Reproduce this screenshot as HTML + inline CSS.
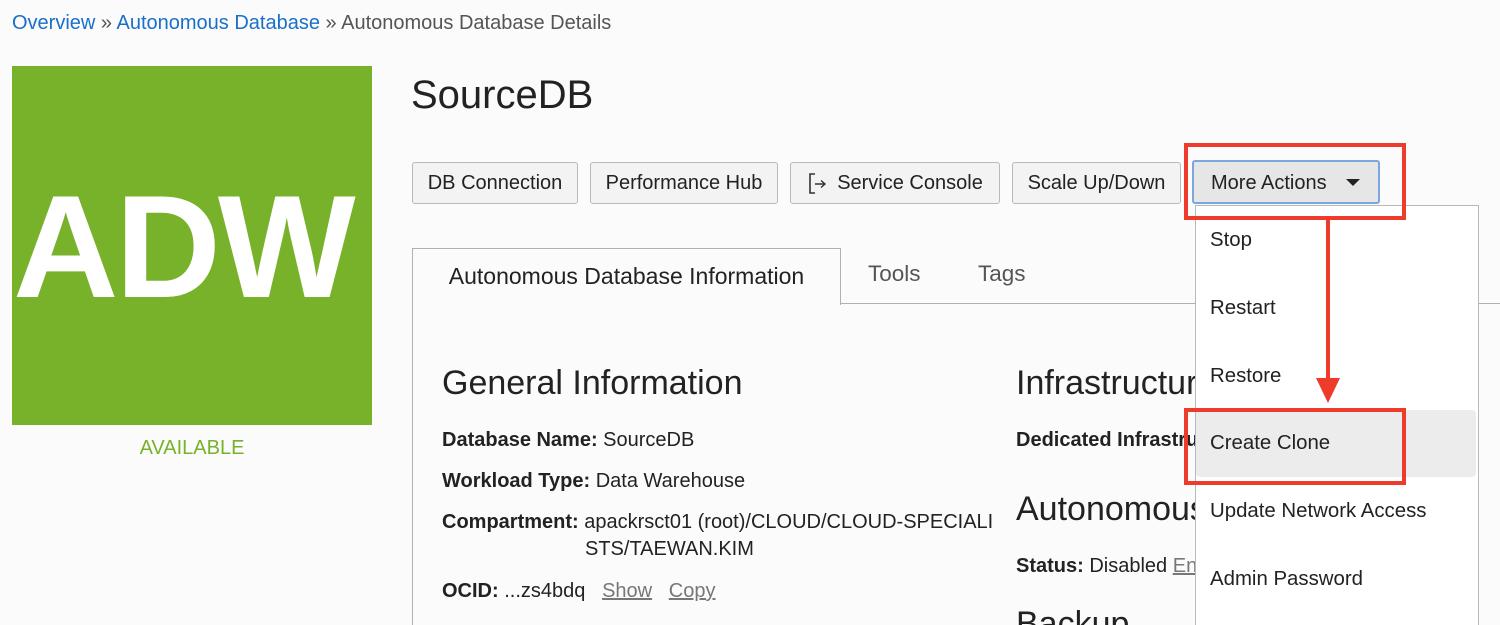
<!DOCTYPE html>
<html><head><style>
html,body{margin:0;width:1500px;height:625px;overflow:hidden}
body{background:#fbfbfb;font-family:"Liberation Sans",Arial,sans-serif;color:#222;position:relative}
.a{position:absolute;white-space:nowrap}
.bc{top:12px;left:12px;font-size:20px;color:#555}
.bc a{color:#1a6fc9;text-decoration:none}
.logo{left:12px;top:66px;width:360px;height:359px;background:#78b22a;overflow:hidden}
.logo span{position:absolute;left:1px;top:108px;font-size:146px;font-weight:bold;color:#fff;letter-spacing:-3px;line-height:146px}
.btn{top:162px;height:40px;border:1px solid #b9b9b9;border-radius:3px;background:#f3f3f3;font-size:20px;line-height:40px;text-align:center;box-sizing:content-box}
.tab{top:248px;left:412px;width:427px;height:56px;border:1px solid #b0b0b0;border-bottom:none;background:#fbfbfb;font-size:23px;line-height:54px;text-align:center;color:#222}
.lbl{font-size:20px;color:#222}
h2{margin:0;font-weight:normal;font-size:34px}
.dd{left:1195px;top:205px;width:282px;height:430px;background:#fff;border:1px solid #b9b9b9}
.it{left:1210px;font-size:20.4px;color:#222}
.red{border:4px solid #ee3b2b;box-sizing:border-box}
u{color:#777;text-decoration:underline}
</style></head><body>
<div class="a bc"><a>Overview</a> » <a>Autonomous Database</a> » Autonomous Database Details</div>
<div class="a logo"><span>ADW</span></div>
<div class="a" style="left:12px;width:360px;top:437px;text-align:center;font-size:20px;color:#78b22a">AVAILABLE</div>
<div class="a" style="left:411px;top:73px;font-size:40px">SourceDB</div>

<div class="a btn" style="left:412px;width:164px">DB Connection</div>
<div class="a btn" style="left:590px;width:186px">Performance Hub</div>
<div class="a btn" style="left:790px;width:208px"><svg width="22" height="24" viewBox="0 0 22 24" style="vertical-align:-6px;margin-right:8px"><path d="M8 3H3v19h5" fill="none" stroke="#333" stroke-width="1.6"/><path d="M8 13h10M14 9.5l4 3.5-4 3.5" fill="none" stroke="#333" stroke-width="1.4"/></svg>Service Console</div>
<div class="a btn" style="left:1012px;width:167px">Scale Up/Down</div>
<div class="a btn" style="left:1192px;background:#e6e6e6;border:2px solid #7ba7de;top:160px;text-align:left;padding-left:17px;box-sizing:border-box;width:188px;height:44px;line-height:42px">More Actions <span style="display:inline-block;margin-left:14px;border-left:7px solid transparent;border-right:7px solid transparent;border-top:7px solid #222;vertical-align:3px"></span></div>

<div class="a" style="left:840px;top:303px;width:660px;border-top:1px solid #b0b0b0"></div>
<div class="a" style="left:412px;top:303px;height:330px;border-left:1px solid #b0b0b0"></div>
<div class="a tab">Autonomous Database Information</div>
<div class="a" style="left:868px;top:261px;font-size:22.5px;color:#555">Tools</div>
<div class="a" style="left:978px;top:261px;font-size:22.5px;color:#555">Tags</div>

<div class="a" style="left:442px;top:364px"><h2>General Information</h2></div>
<div class="a lbl" style="left:442px;top:429px"><b>Database Name:</b> SourceDB</div>
<div class="a lbl" style="left:442px;top:470px"><b>Workload Type:</b> Data Warehouse</div>
<div class="a lbl" style="left:442px;top:511px"><b>Compartment:</b> apackrsct01 (root)/CLOUD/CLOUD-SPECIALI</div>
<div class="a lbl" style="left:585px;top:538px">STS/TAEWAN.KIM</div>
<div class="a lbl" style="left:442px;top:580px"><b>OCID:</b> ...zs4bdq &nbsp;&nbsp;<u>Show</u> &nbsp;&nbsp;<u>Copy</u></div>

<div class="a" style="left:1016px;top:364px"><h2>Infrastructure</h2></div>
<div class="a lbl" style="left:1016px;top:429px"><b>Dedicated Infrastructure</b></div>
<div class="a" style="left:1016px;top:490px"><h2>Autonomous</h2></div>
<div class="a lbl" style="left:1016px;top:555px"><b>Status:</b> Disabled <u>Enable</u></div>
<div class="a" style="left:1016px;top:605px"><h2>Backup</h2></div>

<div class="a dd"></div>
<div class="a" style="left:1196px;top:410px;width:280px;height:67px;background:#ececec;border-radius:4px"></div>
<div class="a it" style="top:229px">Stop</div>
<div class="a it" style="top:297px">Restart</div>
<div class="a it" style="top:365px">Restore</div>
<div class="a it" style="top:432px">Create Clone</div>
<div class="a it" style="top:500px">Update Network Access</div>
<div class="a it" style="top:568px">Admin Password</div>

<div class="a red" style="left:1184px;top:143px;width:222px;height:77px"></div>
<div class="a red" style="left:1184px;top:408px;width:222px;height:77px"></div>
<div class="a" style="left:1326px;top:219px;width:4px;height:160px;background:#ee3b2b"></div>
<div class="a" style="left:1316px;top:378px;border-left:12px solid transparent;border-right:12px solid transparent;border-top:25px solid #ee3b2b"></div>
</body></html>
